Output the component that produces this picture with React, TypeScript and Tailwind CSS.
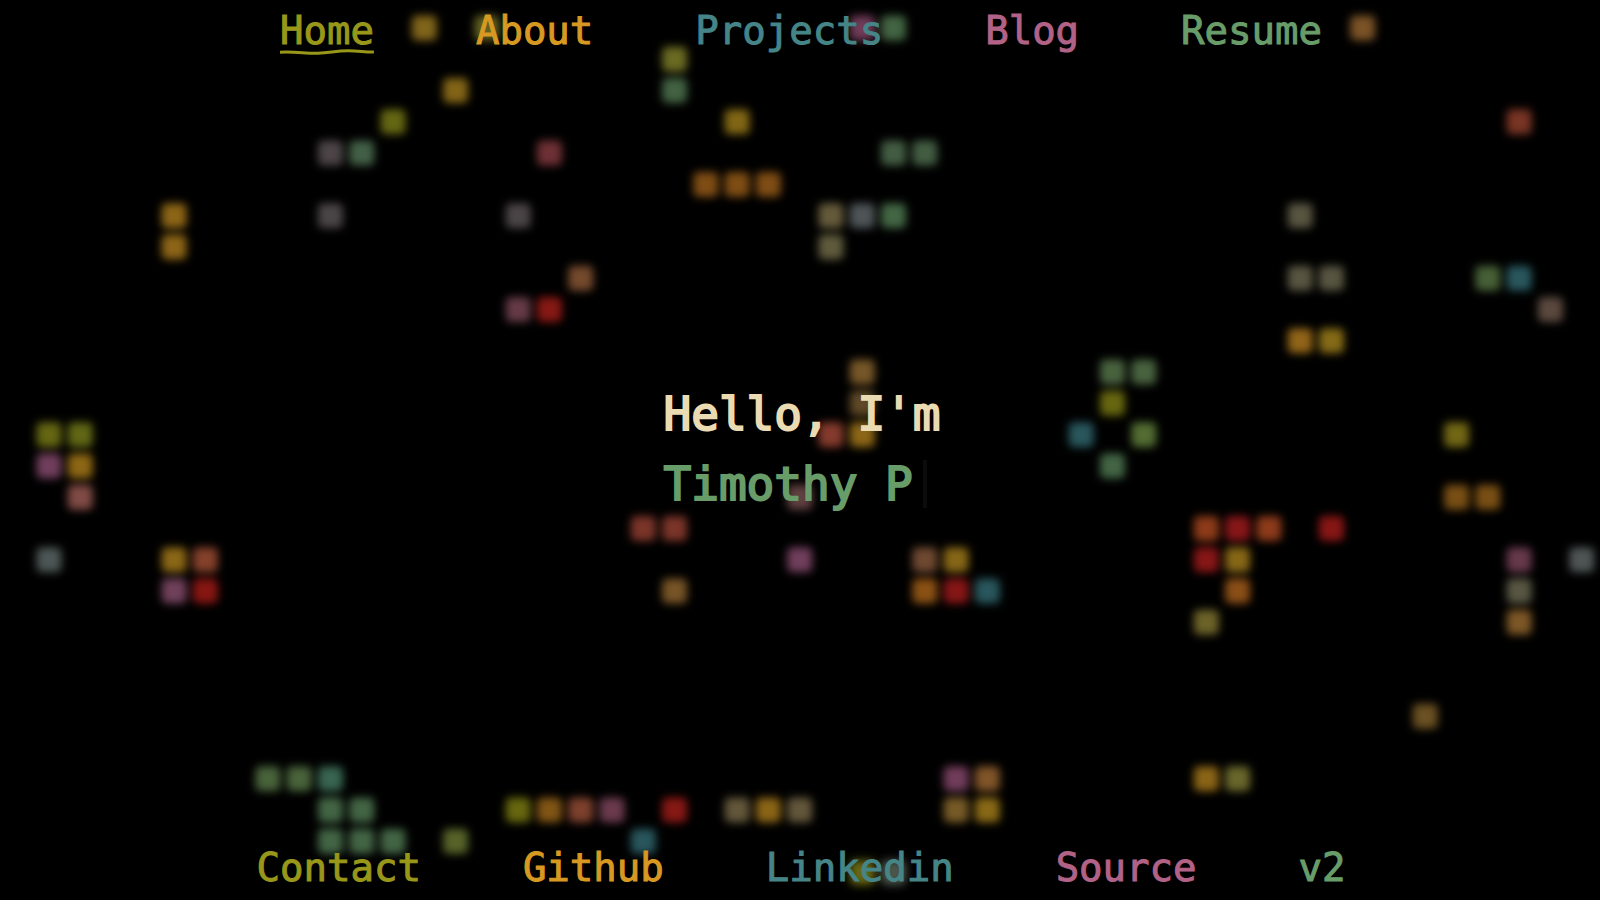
type Item = { label: string; href: string; color: string; current?: boolean };

const topLinks: Item[] = [
  { label: "Home", href: "#home", color: "text-[#98971a]", current: true },
  { label: "About", href: "#about", color: "text-[#d79921]" },
  { label: "Projects", href: "#projects", color: "text-[#458588]" },
  { label: "Blog", href: "#blog", color: "text-[#b16286]" },
  { label: "Resume", href: "#resume", color: "text-[#689d6a]" },
];

const bottomLinks: Item[] = [
  { label: "Contact", href: "#contact", color: "text-[#98971a]" },
  { label: "Github", href: "#github", color: "text-[#d79921]" },
  { label: "Linkedin", href: "#linkedin", color: "text-[#458588]" },
  { label: "Source", href: "#source", color: "text-[#b16286]" },
  { label: "v2", href: "#v2", color: "text-[#689d6a]" },
];

// Live cells of the automaton: column, row, colour.
const cells: [number, number, string][] = [
  [13, 0, "#80641a"], [15, 0, "#626020"], [27, 0, "#703c58"], [28, 0, "#426442"], [43, 0, "#7a5226"],
  [21, 1, "#6a6a22"],
  [14, 2, "#826416"], [21, 2, "#426242"],
  [12, 3, "#646612"], [23, 3, "#806614"], [48, 3, "#783424"],
  [10, 4, "#4c4446"], [11, 4, "#425f46"], [17, 4, "#6e3034"], [28, 4, "#425c42"], [29, 4, "#425c42"],
  [22, 5, "#7e4c14"], [23, 5, "#7e4c14"], [24, 5, "#7e4c14"],
  [5, 6, "#8c6416"], [10, 6, "#4a4446"], [16, 6, "#4a4446"], [26, 6, "#645a3a"], [27, 6, "#4e5456"],
  [28, 6, "#426644"], [41, 6, "#575440"],
  [5, 7, "#8c6416"], [26, 7, "#5f5a3c"],
  [18, 8, "#74492c"], [41, 8, "#575440"], [42, 8, "#575440"], [47, 8, "#465f36"], [48, 8, "#28565c"],
  [16, 9, "#643a46"], [17, 9, "#861814"], [49, 9, "#5a483e"],
  [41, 10, "#906418"], [42, 10, "#846a16"],
  [27, 11, "#765628"], [35, 11, "#48623e"], [36, 11, "#48623e"],
  [27, 12, "#5e4826"], [35, 12, "#666610"],
  [1, 13, "#646612"], [2, 13, "#606614"], [26, 13, "#843a2c"], [27, 13, "#8c6616"],
  [34, 13, "#28565c"], [36, 13, "#526c32"], [46, 13, "#706614"],
  [1, 14, "#703e5c"], [2, 14, "#8c6614"], [35, 14, "#426444"],
  [2, 15, "#804a44"], [25, 15, "#604040"], [46, 15, "#784e14"], [47, 15, "#784e14"],
  [20, 16, "#7a3428"], [21, 16, "#7a3428"], [38, 16, "#8c3a18"], [39, 16, "#861618"],
  [40, 16, "#8c3a1a"], [42, 16, "#861614"],
  [1, 17, "#4c5654"], [5, 17, "#8a6616"], [6, 17, "#84402a"], [25, 17, "#703e5c"], [29, 17, "#6e4830"],
  [30, 17, "#866616"], [38, 17, "#861616"], [39, 17, "#866616"], [48, 17, "#66384a"], [50, 17, "#4e5454"],
  [5, 18, "#70405a"], [6, 18, "#861612"], [21, 18, "#765426"], [29, 18, "#8a5014"], [30, 18, "#861616"],
  [31, 18, "#28565c"], [39, 18, "#8a4e16"], [48, 18, "#585642"],
  [38, 19, "#6c6228"], [48, 19, "#7c5626"],
  [45, 22, "#6a5022"],
  [8, 24, "#48623a"], [9, 24, "#48623a"], [10, 24, "#386450"], [30, 24, "#703c5a"], [31, 24, "#805428"],
  [38, 24, "#8a6416"], [39, 24, "#68662a"],
  [10, 25, "#426444"], [11, 25, "#426444"], [16, 25, "#66660f"], [17, 25, "#805414"], [18, 25, "#7c402c"],
  [19, 25, "#6a3a4c"], [21, 25, "#861814"], [23, 25, "#62563a"], [24, 25, "#8a6416"], [25, 25, "#62563a"],
  [30, 25, "#765a26"], [31, 25, "#886816"],
  [10, 26, "#426444"], [11, 26, "#426444"], [12, 26, "#426444"], [14, 26, "#566228"], [20, 26, "#28565c"],
  [27, 27, "#666614"], [28, 27, "#4a5448"],
];

const PITCH = 31.28;
const CELL = 25;

function LifeBackground() {
  return (
    <svg
      className="pointer-events-none absolute inset-0 h-full w-full"
      viewBox="0 0 1600 900"
      preserveAspectRatio="xMidYMid slice"
      aria-hidden="true"
    >
      <filter id="soften" x="0" y="0" width="1600" height="900" filterUnits="userSpaceOnUse" colorInterpolationFilters="sRGB">
        <feGaussianBlur stdDeviation="4.5" />
      </filter>
      <g filter="url(#soften)">
        {cells.map(([col, row, fill]) => (
          <rect
            key={`${col}-${row}`}
            x={17.7 + col * PITCH - CELL / 2}
            y={28 + row * PITCH - CELL / 2}
            width={CELL}
            height={CELL}
            rx="5"
            fill={fill}
          />
        ))}
      </g>
    </svg>
  );
}

function Links({ items, label }: { items: Item[]; label: string }) {
  return (
    <nav aria-label={label}>
      <ul className="flex flex-wrap justify-center gap-x-[102px] pl-0.5 text-[39px] leading-14 [-webkit-text-stroke:1px]">
        {items.map((item) => (
          <li key={item.label}>
            <a
              href={item.href}
              aria-current={item.current ? "page" : undefined}
              className={`relative block ${item.color}`}
            >
              {item.label}
              {item.current && (
                <svg
                  className="absolute bottom-1 left-0 h-1.5 w-full"
                  viewBox="0 0 94 6"
                  preserveAspectRatio="none"
                  fill="none"
                  stroke="currentColor"
                  strokeWidth="3"
                  aria-hidden="true"
                >
                  <path d="M0 3.2C16 2.4 26 4.6 38 4.2S56 1.8 68 1.8S84 3.2 94 3" />
                </svg>
              )}
            </a>
          </li>
        ))}
      </ul>
    </nav>
  );
}

export default function App() {
  return (
    <div className="relative flex min-h-screen flex-col overflow-hidden bg-black font-['DejaVu_Sans_Mono',monospace]">
      <LifeBackground />
      <header className="relative pt-[3px]">
        <Links items={topLinks} label="Main" />
      </header>
      <main className="relative flex flex-1 items-center justify-center pb-0.5 pl-1">
        <h1 className="text-[46px] leading-[70px] text-[#ebdbb2] [-webkit-text-stroke:2px]">
          Hello, I'm
          <span className="flex items-center text-[#689d6a]">
            Timothy P
            <span className="ml-2.5 h-12 w-1 bg-[#0b0b0b]" />
          </span>
        </h1>
      </main>
      <footer className="relative pb-1">
        <Links items={bottomLinks} label="Elsewhere" />
      </footer>
    </div>
  );
}
